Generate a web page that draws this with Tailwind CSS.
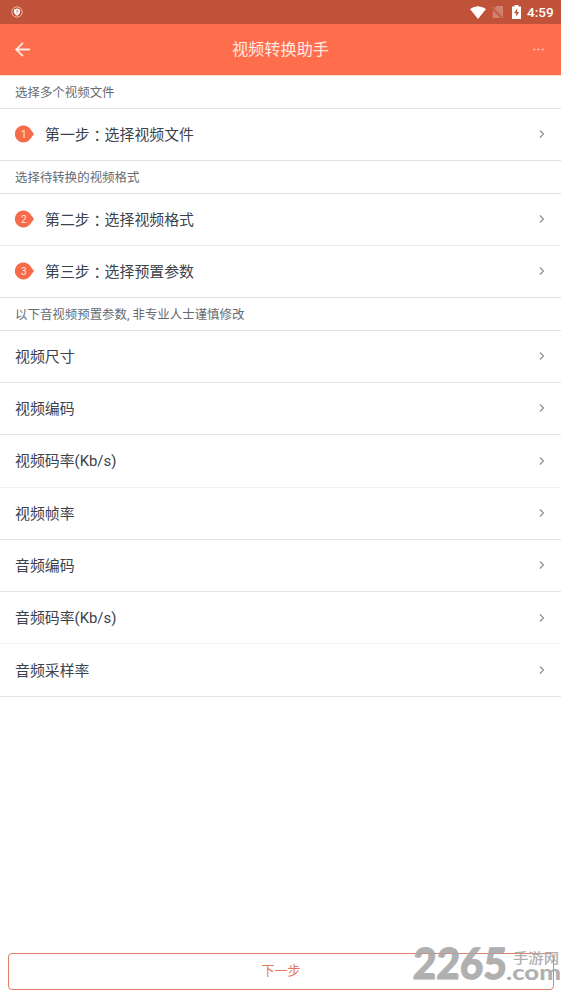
<!DOCTYPE html>
<html lang="zh-CN">
<head>
<meta charset="utf-8">
<title>视频转换助手</title>
<script src="https://cdn.jsdelivr.net/npm/@tailwindcss/browser@4"></script>
</head>
<body class="bg-white font-[Roboto,'Noto_Sans_CJK_SC',sans-serif]">
<svg class="hidden">
  <symbol id="chev" viewBox="0 0 8 10"><path d="M2 1.5 5.500 5 2 8.500" fill="none" stroke="#929498" stroke-width="1.300"/></symbol>
  <symbol id="pin" viewBox="0 0 20 18"><path d="M8.500 .5a8.500 8.500 0 0 1 6.800 3.600L19 9l-3.700 4.900A8.500 8.500 0 1 1 8.500 .5Z" fill="#f66c4b"/></symbol>
</svg>
<div class="relative flex h-[997px] w-[561px] flex-col overflow-hidden bg-white">
  <div class="flex h-6 shrink-0 items-center bg-[#bf5238] pl-[11px] pr-2 text-white">
    <svg class="size-3" viewBox="0 0 12 12"><circle cx="6" cy="6" r="5.2" fill="none" stroke="#efc4b8" stroke-width=".9"/><path d="M6 2.6 9 3.5v2.3c0 1.8-1.2 3-3 3.9-1.800-.9-3-2.100-3-3.900V3.500Z" fill="#fff"/><path d="M5.200 4.700h1.600v1L6 6.500v1" fill="none" stroke="#bf5238" stroke-width=".7"/></svg>
    <svg class="ml-auto h-[13px] w-4" viewBox="0 0 16 13"><path d="M0 3Q8-2.600 16 3L8 13Z" fill="#fff"/></svg>
    <svg class="ml-[6px] h-3 w-3" viewBox="0 0 12 12"><path d="M4.500 0H11v10.500L2.700 2ZM.8 4 8.800 12H.8Z" fill="#cf8370"/><path d="m.3.8 11 11" stroke="#d6927f" stroke-width="1"/></svg>
    <svg class="ml-2 h-[14px] w-[9px]" viewBox="0 0 9 14"><path d="M2.600 0h3.800v1.500H9V14H0V1.500h2.600Z" fill="#fff"/><path d="M5.200 3.500 2 8.300h2.200v3.400L7 6.900H5.100Z" fill="#bf5238"/></svg>
    <span class="ml-[6px] w-[26px] whitespace-nowrap text-[13.500px] leading-6 font-medium">4:59</span>
  </div>
  <div class="flex h-[52px] shrink-0 items-center border-b border-[#ffd9cf] bg-[#ff6e4c] px-[15px]">
    <svg class="h-[15px] w-[15px]" viewBox="0 0 15 15"><path d="M15 7.500H1.500M8 .8 1.200 7.500 8 14.200" fill="none" stroke="#ffeae3" stroke-width="1.800"/></svg>
    <h1 class="flex-1 text-center text-[16.200px] leading-6 text-[#ffe8e1]">视频转换助手</h1>
    <svg class="h-[3px] w-[15px]" viewBox="0 0 15 3"><g fill="#ffc9ba"><circle cx="3.200" cy="1.500" r="1.100"/><circle cx="7.400" cy="1.500" r="1.100"/><circle cx="11.700" cy="1.500" r="1.100"/></g></svg>
  </div>
  <main class="text-[14.900px] text-[#3b424c]">
    <div class="flex h-[33px] items-center border-b border-[#e3e4e6] px-[15px] pt-[3px] text-[12.450px] text-[#666b73]">选择多个视频文件</div>
    <div class="flex h-[52px] items-center border-b border-[#dedfe1] px-[15px] pt-px"><span class="relative mr-[10px] flex h-[18px] w-5 items-center pb-[2px] pl-[6px] text-[10px] text-[#ffe4dc]"><svg class="absolute inset-x-0 -top-px h-[18px] w-5"><use href="#pin"/></svg><span class="relative">1</span></span>第一步<span class="font-['Noto_Sans_CJK_TC']" lang="zh-TW">：</span>选择视频文件<svg class="mb-[2px] ml-auto h-[10px] w-2"><use href="#chev"/></svg></div>
    <div class="flex h-[33px] items-center border-b border-[#dedfe1] px-[15px] pt-[3px] text-[12.450px] text-[#666b73]">选择待转换的视频格式</div>
    <div class="flex h-[52px] items-center border-b border-[#eaebec] px-[15px] pt-px"><span class="relative mr-[10px] flex h-[18px] w-5 items-center pb-[2px] pl-[6px] text-[10px] text-[#ffe4dc]"><svg class="absolute inset-x-0 -top-px h-[18px] w-5"><use href="#pin"/></svg><span class="relative">2</span></span>第二步<span class="font-['Noto_Sans_CJK_TC']" lang="zh-TW">：</span>选择视频格式<svg class="mb-[2px] ml-auto h-[10px] w-2"><use href="#chev"/></svg></div>
    <div class="flex h-[52px] items-center border-b border-[#dedfe1] px-[15px] pt-px"><span class="relative mr-[10px] flex h-[18px] w-5 items-center pb-[2px] pl-[6px] text-[10px] text-[#ffe4dc]"><svg class="absolute inset-x-0 -top-px h-[18px] w-5"><use href="#pin"/></svg><span class="relative">3</span></span>第三步<span class="font-['Noto_Sans_CJK_TC']" lang="zh-TW">：</span>选择预置参数<svg class="mb-[2px] ml-auto h-[10px] w-2"><use href="#chev"/></svg></div>
    <div class="flex h-[33px] items-center border-b border-[#e0e1e3] px-[15px] pt-[3px] text-[12.450px] text-[#666b73]">以下音视频预置参数, 非专业人士谨慎修改</div>
    <div class="flex h-[52px] items-center border-b border-[#e3e4e6] px-[15px] pt-px">视频尺寸<svg class="mb-[2px] ml-auto h-[10px] w-2"><use href="#chev"/></svg></div>
    <div class="flex h-[52px] items-center border-b border-[#e3e4e6] px-[15px] pt-px">视频编码<svg class="mb-[2px] ml-auto h-[10px] w-2"><use href="#chev"/></svg></div>
    <div class="flex h-[53px] items-center border-b border-[#f1f2f3] px-[15px]">视频码率(Kb/s)<svg class="ml-auto h-[10px] w-2"><use href="#chev"/></svg></div>
    <div class="flex h-[52px] items-center border-b border-[#e3e4e6] px-[15px] pt-px">视频帧率<svg class="mb-[2px] ml-auto h-[10px] w-2"><use href="#chev"/></svg></div>
    <div class="flex h-[52px] items-center border-b border-[#e3e4e6] px-[15px] pt-px">音频编码<svg class="mb-[2px] ml-auto h-[10px] w-2"><use href="#chev"/></svg></div>
    <div class="flex h-[52px] items-center border-b border-[#f6f6f7] px-[15px] pt-px">音频码率(Kb/s)<svg class="mb-px ml-auto h-[10px] w-2"><use href="#chev"/></svg></div>
    <div class="flex h-[53px] items-center border-b border-[#e3e4e6] px-[15px] pt-[2px]">音频采样率<svg class="mb-[2px] ml-auto h-[10px] w-2"><use href="#chev"/></svg></div>
  </main>
  <button class="mt-auto mr-[7px] mb-[7px] ml-[8px] flex h-[37px] shrink-0 items-center justify-center rounded border border-[#e07f6a] pb-px text-[13px] text-[#e5795f]">下一步</button>
  <svg class="absolute left-[400px] top-[937px] h-[60px] w-[161px] overflow-visible opacity-90" viewBox="0 0 161 60" fill="#a8a8a8">
    <text transform="translate(12.500 42) skewX(-2)" x="0" y="0" font-family="Lato" font-weight="900" font-size="43" stroke="#a8a8a8" stroke-width="1" stroke-linejoin="round" textLength="94" lengthAdjust="spacingAndGlyphs">2265</text>
    <text x="113" y="25.500" font-family="Noto Sans CJK SC" font-weight="500" font-size="14" textLength="46" lengthAdjust="spacingAndGlyphs">手游网</text>
    <text x="106" y="42.500" font-family="Lato" font-weight="900" font-size="21" textLength="55" lengthAdjust="spacingAndGlyphs">.com</text>
  </svg>
</div>
</body>
</html>
